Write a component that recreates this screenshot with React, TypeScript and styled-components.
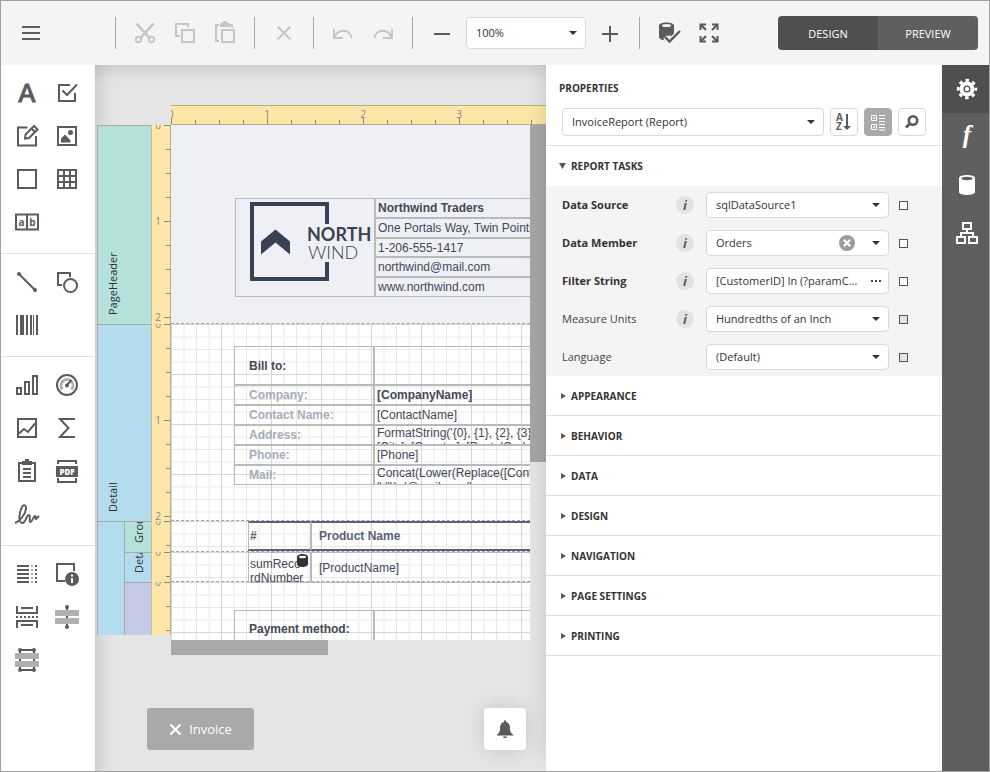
import React from "react";
import styled, { createGlobalStyle, css } from "styled-components";

const ui = `"Open Sans", "Noto Sans", sans-serif`;
const doc = `"Liberation Sans", Arial, sans-serif`;
const ink = "#5b5b5b";
const edge = "#bababa";

const Global = createGlobalStyle`
  * { box-sizing: border-box; }
  body { margin: 0; background: #fff; font-family: ${ui}; font-size: 11px; color: #333; }
  button, input, select { font: inherit; color: inherit; }
`;

const Frame = styled.div`
  display: flex;
  flex-direction: column;
  min-height: 100vh;
  border: 1px solid #a0a0a0;
  background: #fff;
`;

/* ---------- top toolbar ---------- */

const Toolbar = styled.header`
  display: flex;
  align-items: center;
  height: 64px;
  padding: 0 11px 0 10px;
  background: #f4f4f4;
`;

const IconButton = styled.button`
  display: flex;
  align-items: center;
  justify-content: center;
  width: 40px;
  height: 40px;
  padding: 0;
  border: 0;
  background: none;
  color: ${ink};
  &:disabled { color: #c6c6c6; }
`;

const Separator = styled.span`
  width: 1px;
  height: 32px;
  margin: 0 9px;
  background: #a8a8a8;
`;

const MenuSlot = styled.div`
  width: 95px;
`;

const ModeSwitch = styled.div`
  display: flex;
  margin-left: auto;
  border-radius: 4px;
  overflow: hidden;
`;

const ModeButton = styled.button<{ $active?: boolean }>`
  width: 100px;
  height: 34px;
  padding: 0;
  border: 0;
  color: #fff;
  background: ${(p) => (p.$active ? "#4f4f4f" : "#5f5f5f")};
`;

/* ---------- fields ---------- */

const FieldBox = styled.div<{ $size?: "zoom" | "object" | "row" }>`
  position: relative;
  display: flex;
  align-items: center;
  border: 1px solid #d9d9d9;
  border-radius: 4px;
  background: #fff;
  ${(p) => p.$size === "zoom" && css`width: 120px; height: 32px; margin: 0 4px;`}
  ${(p) => p.$size === "object" && css`flex: 1; height: 28px;`}
  ${(p) => p.$size === "row" && css`height: 26px;`}
`;

const SelectControl = styled.select`
  flex: 1;
  min-width: 0;
  height: 100%;
  padding: 0 24px 2px 9px;
  border: 0;
  border-radius: 4px;
  background: none;
  appearance: none;
  outline: none;
`;

const TextControl = styled.input`
  flex: 1;
  min-width: 0;
  height: 100%;
  padding: 0 0 2px 9px;
  border: 0;
  background: none;
  outline: none;
`;

const Caret = styled.svg`
  position: absolute;
  right: 8px;
  pointer-events: none;
`;

const ClearButton = styled.button`
  position: absolute;
  right: 33px;
  display: flex;
  padding: 0;
  border: 0;
  background: none;
`;

const MoreButton = styled.button`
  display: flex;
  align-items: center;
  justify-content: center;
  width: 24px;
  height: 24px;
  padding: 0;
  border: 0;
  background: none;
`;

function Select({ id, label, value, size, clear }: { id: string; label?: string; value: string; size: "zoom" | "object" | "row"; clear?: boolean }) {
  return (
    <FieldBox $size={size}>
      <SelectControl id={id} aria-label={label} defaultValue={value}>
        <option>{value}</option>
      </SelectControl>
      {clear && (
        <ClearButton aria-label="Clear">
          <svg width="16" height="16" viewBox="0 0 16 16">
            <circle cx="8" cy="8" r="8" fill="#9b9b9b" />
            <path d="M4.8 4.8l6.4 6.4M11.2 4.8l-6.4 6.4" stroke="#fff" strokeWidth="2.2" />
          </svg>
        </ClearButton>
      )}
      <Caret width="8" height="4" viewBox="0 0 8 4"><path d="M0 0h8L4 4z" fill="#333" /></Caret>
    </FieldBox>
  );
}

/* ---------- main layout ---------- */

const Body = styled.main`
  display: flex;
  flex: 1;
  overflow: hidden;
`;

const Toolbox = styled.nav`
  width: 94px;
  flex: none;
  background: #fff;
`;

const ToolGroup = styled.div`
  display: grid;
  grid-template-columns: 40px 40px;
  grid-auto-rows: 43px;
  padding: 6px 6px 10px;
  & + & { border-top: 1px solid #e0e0e0; }
`;

const ToolButton = styled(IconButton)`
  height: 43px;
`;

const Surface = styled.section`
  display: flex;
  flex-direction: column;
  flex: 1;
  min-width: 0;
  background: #e5e5e5;
  box-shadow: inset 0 24px 20px -22px rgba(0, 0, 0, 0.16), inset 24px 0 20px -22px rgba(0, 0, 0, 0.16);
`;

const Designer = styled.div`
  display: grid;
  grid-template-columns: 74px minmax(0, 1fr) 16px;
  grid-template-rows: 20px auto 15px;
  padding: 40px 0 0 2px;
`;

const RulerTop = styled.div`
  grid-column: 2 / 4;
  display: flex;
  overflow: hidden;
  border-top: 1px solid #b9ac8e;
  border-bottom: 1px solid #b9ac8e;
  background:
    linear-gradient(90deg, #858585 1px, transparent 1px) left bottom / 96px 6px repeat-x,
    linear-gradient(90deg, #858585 1px, transparent 1px) left bottom / 24px 4px repeat-x,
    #fde6a8;
`;

const tickText = css`
  color: #8a8a8a;
  font-size: 10px;
  flex: none;
`;

const TickX = styled.span`
  ${tickText}
  width: 96px;
  line-height: 16px;
  text-align: center;
  &:first-child { width: 48px; margin-left: -3px; text-align: left; }
  &:nth-child(2) { margin-left: 3px; }
`;

const RulerSide = styled.div`
  width: 20px;
  overflow: hidden;
  border-left: 1px solid #c9bb98;
  border-right: 1px solid #b9ac8e;
  background:
    linear-gradient(#858585 1px, transparent 1px) right top / 6px 96px repeat-y,
    linear-gradient(#858585 1px, transparent 1px) right top / 4px 24px repeat-y,
    #fde6a8;
`;

const TickList = styled.div`
  display: flex;
  flex-direction: column;
  width: 12px;
  margin-top: -48px;
`;

const TickY = styled.span`
  ${tickText}
  height: 96px;
  line-height: 96px;
  text-align: center;
`;

const BandColumn = styled.div`
  grid-column: 1;
  border-left: 1px solid #a9a9a9;
  align-self: start;
`;

const BandRow = styled.div<{ $h: number }>`
  display: flex;
  height: ${(p) => p.$h}px;
`;

const BandLabel = styled.div<{ $bg: string; $narrow?: boolean }>`
  flex: 1;
  display: flex;
  justify-content: flex-start;
  align-items: center;
  writing-mode: vertical-rl;
  transform: rotate(180deg);
  overflow: hidden;
  padding-top: 9px;
  padding-left: ${(p) => (p.$narrow ? 0 : 24)}px;
  border-bottom: 1px solid #a9a9a9;
  background: ${(p) => p.$bg};
  font-size: 11px;
  white-space: nowrap;
`;

const NestedBands = styled.div`
  display: flex;
`;

const NestedStem = styled.div`
  width: 27px;
  border-top: 1px solid #a9a9a9;
  border-right: 1px solid #a9a9a9;
  background: #b3dcee;
`;

const NestedStack = styled.div`
  flex: 1;
`;

const Viewport = styled.div`
  overflow: hidden;
  background: #fff;
`;

const Paper = styled.div`
  width: 650px;
`;

const PaperBand = styled.div<{ $h: number; $shade?: boolean; $x: number; $y: number }>`
  height: ${(p) => p.$h}px;
  padding: ${(p) => p.$y}px 0 0 ${(p) => p.$x}px;
  border-bottom: 1px dashed #a3a3a3;
  &:last-child { border-bottom: 0; }
  ${(p) =>
    p.$shade
      ? css`background: #eff0f5;`
      : css`
          background:
            linear-gradient(90deg, #d6d6d6 1px, transparent 1px) 0 0 / 50px 100%,
            linear-gradient(#d6d6d6 1px, transparent 1px) 0 0 / 100% 50px,
            linear-gradient(90deg, #e8e8e8 1px, transparent 1px) 25px 0 / 50px 100%,
            linear-gradient(#e8e8e8 1px, transparent 1px) 0 25px / 100% 50px,
            linear-gradient(90deg, #f4f4f4 2px, transparent 2px) 12px 0 / 25px 100%,
            linear-gradient(#f4f4f4 2px, transparent 2px) 0 12px / 100% 25px,
            #fff;
        `}
`;

const ReportTable = styled.div<{ $cols: string; $rows: string }>`
  display: grid;
  grid-template-columns: ${(p) => p.$cols};
  grid-template-rows: ${(p) => p.$rows};
  font-family: ${doc};
  font-size: 12px;
  line-height: 14px;
  color: #444857;
`;

const Cell = styled.div<{ $bold?: boolean; $muted?: boolean; $pad?: number; $top?: number; $head?: boolean; $span?: number }>`
  position: relative;
  display: flex;
  align-items: ${(p) => (p.$top === undefined ? "center" : "flex-start")};
  min-width: 0;
  overflow: hidden;
  padding-top: ${(p) => p.$top ?? 0}px;
  padding-left: ${(p) => p.$pad ?? 2}px;
  border: 1px solid ${edge};
  white-space: pre;
  font-weight: ${(p) => (p.$bold ? 700 : 400)};
  ${(p) => p.$muted && css`color: #a6adbb;`}
  ${(p) => p.$span && css`grid-row: span ${p.$span};`}
  ${(p) => p.$head && css`
    color: #5a6178;
    border-top: 2px solid #5a6178;
    border-bottom: 2px solid #5a6178;
  `}
`;

const LogoMark = styled.svg`
  display: block;
  margin: 0 0 8px;
`;

const BindingBadge = styled.svg`
  position: absolute;
  top: 1px;
  right: 2px;
`;

const ScrollThumbY = styled.div`
  height: 337px;
  background: #a6a6a6;
`;

const ScrollThumbX = styled.div`
  grid-column: 2;
  width: 157px;
  background: #a9a9a9;
`;

const SurfaceFooter = styled.footer`
  display: flex;
  justify-content: space-between;
  margin-top: auto;
  padding: 0 20px 21px 52px;
`;

const DocTab = styled.button`
  display: flex;
  align-items: center;
  justify-content: center;
  gap: 7px;
  width: 107px;
  height: 42px;
  padding: 0;
  border: 0;
  border-radius: 3px;
  background: #a9a9a9;
  color: #fff;
  font-size: 13px;
`;

const BellButton = styled.button`
  display: flex;
  align-items: center;
  justify-content: center;
  width: 42px;
  height: 42px;
  padding: 0;
  border: 0;
  border-radius: 4px;
  background: #fff;
  color: ${ink};
  box-shadow: 0 0 20px rgba(0, 0, 0, 0.14);
`;

/* ---------- property panel ---------- */

const Panel = styled.aside`
  position: relative;
  width: 396px;
  flex: none;
  background: #fff;
  box-shadow: 0 -16px 20px rgba(0, 0, 0, 0.14);
`;

const PanelTitle = styled.h2`
  margin: 15px 0 12px 13px;
  font-size: 10px;
  line-height: 16px;
  font-weight: 700;
`;

const ObjectBar = styled.div`
  display: flex;
  gap: 6px;
  padding: 0 16px 9px;
  border-bottom: 1px solid #e0e0e0;
`;

const SquareButton = styled.button<{ $on?: boolean }>`
  display: flex;
  align-items: center;
  justify-content: center;
  width: 28px;
  height: 28px;
  padding: 0;
  border: 1px solid ${(p) => (p.$on ? "#a9a9a9" : "#d9d9d9")};
  border-radius: 4px;
  background: ${(p) => (p.$on ? "#a9a9a9" : "#fff")};
  color: ${ink};
`;

const SectionButton = styled.button<{ $open?: boolean }>`
  display: flex;
  align-items: center;
  gap: 5px;
  width: 100%;
  height: 40px;
  padding: 0 13px;
  border: 0;
  border-bottom: ${(p) => (p.$open ? "0" : "1px solid #e0e0e0")};
  background: none;
  font-size: 10px;
  font-weight: 700;
`;

const PropList = styled.div`
  background: #f4f4f4;
`;

const PropRow = styled.div`
  display: grid;
  grid-template-columns: 114px 18px 12px minmax(0, 1fr) 10px 9px;
  align-items: center;
  height: 38px;
  padding: 0 34px 0 16px;
`;

const PropLabel = styled.label<{ $bold?: boolean }>`
  padding-bottom: 2px;
  font-weight: ${(p) => (p.$bold ? 700 : 400)};
  color: ${(p) => (p.$bold ? "#333" : "#444")};
`;

const InfoButton = styled.button`
  width: 18px;
  height: 18px;
  padding: 0;
  border: 0;
  border-radius: 9px;
  background: #e2e2e2;
  color: ${ink};
  font: italic 700 13px/18px ${ui};
`;

const FieldSlot = styled.div`
  grid-column: 4;
`;

const Tick = styled.input`
  grid-column: 6;
  width: 9px;
  height: 9px;
  margin: 0;
  border: 1px solid #555;
  background: #fff;
  appearance: none;
  &:disabled { background: #e4e4e4; }
`;

const TabStrip = styled.nav`
  position: relative;
  width: 47px;
  flex: none;
  background: #5f5f5f;
`;

const TabButton = styled.button<{ $active?: boolean }>`
  display: flex;
  align-items: center;
  justify-content: center;
  width: 100%;
  height: 48px;
  padding: 0 0 0 3px;
  border: 0;
  color: #fff;
  background: ${(p) => (p.$active ? "#4f4f4f" : "transparent")};
`;

/* ---------- icons ---------- */

const Glyph = styled.svg`
  overflow: visible;
`;

function Icon({ children }: { children: React.ReactNode }) {
  return (
    <Glyph width="24" height="24" viewBox="0 0 24 24" fill="none" stroke="currentColor" strokeWidth="2">
      {children}
    </Glyph>
  );
}

const fill = { fill: "currentColor", stroke: "none" };

const icons: Record<string, React.ReactNode> = {
  menu: <path d="M3 6h18M3 12h18M3 18h18" />,
  cut: <><path d="M3.5 2.5l13 14.5M20.5 2.5l-13 14.500" strokeWidth="2.6" /><circle cx="5.500" cy="18.500" r="2.700" /><circle cx="18.500" cy="18.500" r="2.700" /></>,
  copy: <><path d="M15 6V3H3v12h4" /><path d="M9 9h12v12H9z" /></>,
  paste: <><path d="M6 4H3v16h3M17 4h2v3" /><path d="M7 2h3V0h4v2h3v4H7z" {...fill} /><path d="M9 9h12v12H9z" /></>,
  remove: <path d="M5.500 5.500l13 13M18.500 5.500l-13 13" />,
  undo: <path d="M3 8v9h9M3.500 16.500c3-9 16-9 17 .5" />,
  redo: <path d="M21 8v9h-9M20.500 16.500c-3-9-16-9-17 .5" />,
  minus: <path d="M4 13h16" />,
  plus: <path d="M4 13h16M12 5v16" />,
  validate: <><path d="M2 4.500v12C3 18.500 6 19.500 9 19l3-5 3 2 2-3V4.500C17 .5 2 .5 2 4.500z" {...fill} /><ellipse cx="9.500" cy="4.500" rx="4.500" ry="1.500" fill="#f4f4f4" stroke="none" /><path d="M8 16l4.500 4.500L23 10" stroke="#f4f4f4" strokeWidth="5" /><path d="M8 16l4.500 4.500L23 10" strokeWidth="2.400" /></>,
  full: <><path d="M3.5 9V3.500H9M15 3.500h5.500V9M20.500 15v5.500H15M9 20.500H3.500V15" /><path d="M3.500 3.500L9 9M20.500 3.500L15 9M20.500 20.500L15 15M3.500 20.500L9 15" strokeWidth="2.200" /></>,
  label: <text x="12" y="21" textAnchor="middle" fontFamily="Liberation Mono" fontSize="28" fill="currentColor" strokeWidth="1">A</text>,
  check: <><path d="M15 4H4v16h16v-8" /><path d="M7.500 9.500l4.500 4.500L22 3.500" /></>,
  edit: <><path d="M12.500 3.500H3v18h18V12" /><path d="M10 14.500l.5-4L19 2l3.500 3.500-8.500 8.500zM16.500 4.500L20 8" /></>,
  image: <><path d="M3 3h18v18H3z" /><path d="M6 18.500v-4l4-4 5.500 6v2z" {...fill} /><circle cx="15.500" cy="8.500" r="2.500" {...fill} /></>,
  panel: <path d="M3 3h18v18H3z" />,
  table: <path d="M3 3h18v18H3zM9 3v18M15 3v18M3 9h18M3 15h18" />,
  comb: <><path d="M1 4.500h22v15H1zM12 4.500v15" /><text x="6.500" y="15.500" textAnchor="middle" fontFamily="Open Sans" fontWeight="700" fontSize="10" {...fill}>a</text><text x="17.500" y="15.500" textAnchor="middle" fontFamily="Open Sans" fontWeight="700" fontSize="10" {...fill}>b</text></>,
  line: <><path d="M4 4l16 16" /><circle cx="4" cy="4" r="2" {...fill} /><circle cx="20" cy="20" r="2" {...fill} /></>,
  shape: <><path d="M15 7V3H3v12h4" /><circle cx="15.500" cy="15.500" r="6.500" /></>,
  barcode: <path d="M1 2h2v20H1zM5 2h4v20H5zM11 2h2v20h-2zM15 2h2v20h-2zM18 2h1v20h-1zM21 2h2v20h-2z" {...fill} />,
  chart: <path d="M2 15h4v6H2zM10 9h4v12h-4zM18 3h4v18h-4z" />,
  gauge: <><circle cx="12" cy="12" r="10" /><path d="M7.500 16.500a6 6 0 1 1 9 0" stroke="#b0b0b0" strokeWidth="3" /><path d="M11 13l5.500-6" /><circle cx="12" cy="12.500" r="2" {...fill} /></>,
  spark: <><path d="M3 3h18v18H3z" /><path d="M4 17.500l5-4.500 4 3 7-8.500" /></>,
  sigma: <path d="M20 3H5l8.500 9L5 21h15" />,
  clip: <><path d="M7 4H4v18h16V4h-3M8 10h8M8 14h8M8 18h8" /><path d="M7 2h3V0h4v2h3v4H7z" {...fill} /></>,
  pdf: <><path d="M3 5V2h18v3M3 19v4h18v-4" /><path d="M1 7h22v11H1z" {...fill} /><text x="12" y="15.500" textAnchor="middle" fontFamily="Open Sans" fontWeight="800" fontSize="8" fill="#fff" stroke="none">PDF</text></>,
  sign: <path d="M0 21c5-2 10-8 11-14 .6-4-2.500-5-4-2C4 11 3 20 7 21c4 .5 4-8 7-8 2 0-.5 7 1.500 7s2.500-6 4.500-6c1.500 0-.5 3 1 3l3-3" strokeWidth="1.900" />,
  toc: <><path d="M2 4h12M2 8h12M2 12h12M2 16h12M2 20h12" /><path d="M17 3v18" stroke="#b0b0b0" strokeDasharray="2 2" /><path d="M21 3v18" strokeDasharray="2 2" /></>,
  info: <><path d="M19 9V2H2v17h8" /><circle cx="17" cy="17" r="7" {...fill} /><path d="M17 16v5M17 12.500v2" stroke="#fff" /></>,
  pagebreak: <><path d="M2 1v7h20V1M6 3h12M2 23v-7h20v7M6 20h12" /><path d="M1 12h22" strokeDasharray="2 2" /></>,
  crossline: <><path d="M12 2v20" /><circle cx="12" cy="2" r="2" {...fill} /><circle cx="12" cy="22" r="2" {...fill} /><path d="M0 5h24v6H0zM0 13h24v6H0z" fill="#b0b0b0" stroke="none" /><path d="M12 11v2" /></>,
  crossbox: <><path d="M5 2h14v20H5z" /><circle cx="5" cy="2" r="2" {...fill} /><circle cx="19" cy="2" r="2" {...fill} /><circle cx="5" cy="22" r="2" {...fill} /><circle cx="19" cy="22" r="2" {...fill} /><path d="M0 5h24v6H0zM0 13h24v6H0z" fill="#b0b0b0" stroke="none" /></>,
  bell: <path d="M11 3.500h2v1.500c3 .8 4 3 4 6 0 4 1 5 3 6.500v1H4v-1c2-1.500 3-2.500 3-6.500 0-3 1-5.200 4-6zM10 19.500h4c0 2-4 2-4 0z" {...fill} />,
  gear: <><circle cx="12" cy="12" r="5.500" strokeWidth="4" /><circle cx="12" cy="12" r="8.700" strokeWidth="3" strokeDasharray="3.400 3.433" strokeDashoffset="1.700" /><circle cx="12" cy="12" r="2.200" {...fill} /></>,
  func: <text x="12" y="18" textAnchor="middle" fontFamily="Liberation Serif" fontStyle="italic" fontWeight="700" fontSize="25" {...fill}>f</text>,
  database: <><path d="M4 5v14c0 4 16 4 16 0V5c0-4-16-4-16 0z" {...fill} /><ellipse cx="12" cy="5.500" rx="5.500" ry="1.700" fill="#5f5f5f" stroke="none" /></>,
  tree: <><path d="M8 2h8v6H8zM2 16h8v6H2zM14 16h8v6h-8zM12 8v4M6 16v-4h12v4" /></>,
};

const toolGroups: [string, string][][] = [
  [["label", "Label"], ["check", "Check Box"], ["edit", "Rich Text"], ["image", "Picture Box"], ["panel", "Panel"], ["table", "Table"], ["comb", "Character Comb"]],
  [["line", "Line"], ["shape", "Shape"], ["barcode", "Bar Code"]],
  [["chart", "Chart"], ["gauge", "Gauge"], ["spark", "Sparkline"], ["sigma", "Pivot Grid"], ["clip", "Subreport"], ["pdf", "PDF Content"], ["sign", "PDF Signature"]],
  [["toc", "Table of Contents"], ["info", "Page Info"], ["pagebreak", "Page Break"], ["crossline", "Cross-band Line"], ["crossbox", "Cross-band Box"]],
];

function ToolbarIcon({ name, label, disabled }: { name: string; label: string; disabled?: boolean }) {
  return <IconButton aria-label={label} disabled={disabled}><Icon>{icons[name]}</Icon></IconButton>;
}

function SideRuler({ ticks }: { ticks: number }) {
  return (
    <RulerSide>
      <TickList>
        {Array.from({ length: ticks }, (_, i) => <TickY key={i}>{i}</TickY>)}
      </TickList>
    </RulerSide>
  );
}

function Band({ name, color, height, ticks, narrow }: { name: string; color: string; height: number; ticks: number; narrow?: boolean }) {
  return (
    <BandRow $h={height}>
      <BandLabel $bg={color} $narrow={narrow}>{name}</BandLabel>
      <SideRuler ticks={ticks} />
    </BandRow>
  );
}

function Logo() {
  return (
    <LogoMark width="138" height="90" viewBox="236 199 138 90" fill="#3b4154">
      <path d="M329 224V202H250V281H329V262H325V277H254V206H325V224z" />
      <path d="M275.500 229.500L290 241.500V254.500L275.500 242.500L261 254.500V241.500z" />
      <text x="307" y="241" fontFamily="Lato" fontWeight="700" fontSize="18">NORTH</text>
      <text x="308" y="259" fontFamily="Lato" fontWeight="300" fontSize="18">WIND</text>
    </LogoMark>
  );
}

const contactLines = ["One Portals Way, Twin Points WA", "1-206-555-1417", "northwind@mail.com", "www.northwind.com"];

const billRows: { name: string; value: string; bold?: boolean; top?: number }[] = [
  { name: "Company:", value: "[CompanyName]", bold: true },
  { name: "Contact Name:", value: "[ContactName]" },
  { name: "Address:", value: "FormatString('{0}, {1}, {2}, {3}',\n[City], [Country], [PostalCode]", top: 0 },
  { name: "Phone:", value: "[Phone]" },
  { name: "Mail:", value: "Concat(Lower(Replace([ContactName],\n'','')), '@mail.com')", top: 0 },
];

const properties: { id: string; name: string; value: string; bold?: boolean; info?: boolean; clear?: boolean; text?: boolean }[] = [
  { id: "data-source", name: "Data Source", value: "sqlDataSource1", bold: true, info: true },
  { id: "data-member", name: "Data Member", value: "Orders", bold: true, info: true, clear: true },
  { id: "filter-string", name: "Filter String", value: "[CustomerID] In (?paramC...", bold: true, info: true, text: true },
  { id: "measure-units", name: "Measure Units", value: "Hundredths of an Inch", info: true },
  { id: "language", name: "Language", value: "(Default)" },
];

const sections = ["APPEARANCE", "BEHAVIOR", "DATA", "DESIGN", "NAVIGATION", "PAGE SETTINGS", "PRINTING"];

export default function App() {
  return (
    <>
      <Global />
      <Frame>
        <Toolbar>
          <MenuSlot><ToolbarIcon name="menu" label="Menu" /></MenuSlot>
          <Separator />
          <ToolbarIcon name="cut" label="Cut" disabled />
          <ToolbarIcon name="copy" label="Copy" disabled />
          <ToolbarIcon name="paste" label="Paste" disabled />
          <Separator />
          <ToolbarIcon name="remove" label="Delete" disabled />
          <Separator />
          <ToolbarIcon name="undo" label="Undo" disabled />
          <ToolbarIcon name="redo" label="Redo" disabled />
          <Separator />
          <ToolbarIcon name="minus" label="Zoom out" />
          <Select id="zoom" label="Zoom" value="100%" size="zoom" />
          <ToolbarIcon name="plus" label="Zoom in" />
          <Separator />
          <ToolbarIcon name="validate" label="Validate bindings" />
          <ToolbarIcon name="full" label="Full screen" />
          <ModeSwitch>
            <ModeButton $active>DESIGN</ModeButton>
            <ModeButton>PREVIEW</ModeButton>
          </ModeSwitch>
        </Toolbar>

        <Body>
          <Toolbox>
            {toolGroups.map((group, i) => (
              <ToolGroup key={i}>
                {group.map(([name, label]) => (
                  <ToolButton key={name} aria-label={label}><Icon>{icons[name]}</Icon></ToolButton>
                ))}
              </ToolGroup>
            ))}
          </Toolbox>

          <Surface>
            <Designer>
              <RulerTop>
                {[0, 1, 2, 3].map((n) => <TickX key={n}>{n}</TickX>)}
              </RulerTop>

              <BandColumn>
                <Band name="PageHeader" color="#b4e1db" height={199} ticks={3} />
                <Band name="Detail" color="#b3dcee" height={197} ticks={3} />
                <NestedBands>
                  <NestedStem />
                  <NestedStack>
                    <Band name="GroupHeader" color="#b4e1db" height={31} ticks={1} narrow />
                    <Band name="DetailBand" color="#b3dcee" height={30} ticks={1} narrow />
                    <Band name="" color="#c5cbe7" height={53} ticks={1} narrow />
                  </NestedStack>
                </NestedBands>
              </BandColumn>

              <Viewport>
                <Paper>
                  <PaperBand $h={199} $x={64} $y={73} $shade>
                    <ReportTable $cols="140px 1fr" $rows="20px 20px 19px 20px 20px">
                      <Cell $span={5} $pad={0}><Logo /></Cell>
                      <Cell $bold>Northwind Traders</Cell>
                      {contactLines.map((line) => <Cell key={line}>{line}</Cell>)}
                    </ReportTable>
                  </PaperBand>
                  <PaperBand $h={197} $x={63} $y={22}>
                    <ReportTable $cols="140px 1fr" $rows="39px repeat(5, 20px)">
                      <Cell $bold $pad={14}>Bill to:</Cell>
                      <Cell />
                      {billRows.map((row) => (
                        <React.Fragment key={row.name}>
                          <Cell $bold $muted $pad={14}>{row.name}</Cell>
                          <Cell $bold={row.bold} $top={row.top}>{row.value}</Cell>
                        </React.Fragment>
                      ))}
                    </ReportTable>
                  </PaperBand>
                  <PaperBand $h={31} $x={77} $y={0}>
                    <ReportTable $cols="63px 1fr" $rows="30px">
                      <Cell $bold $head $pad={1}>#</Cell>
                      <Cell $bold $head $pad={7}>Product Name</Cell>
                    </ReportTable>
                  </PaperBand>
                  <PaperBand $h={30} $x={77} $y={0}>
                    <ReportTable $cols="63px 1fr" $rows="31px">
                      <Cell $pad={1} $top={4}>
                        {"sumReco\nrdNumber"}
                        <BindingBadge width="11" height="13" viewBox="0 0 11 13">
                          <path d="M0 3v7c0 4 11 4 11 0V3c0-4-11-4-11 0z" fill="#333" />
                          <ellipse cx="5.500" cy="3" rx="3.500" ry="1.200" fill="#fff" />
                        </BindingBadge>
                      </Cell>
                      <Cell $pad={7}>[ProductName]</Cell>
                    </ReportTable>
                  </PaperBand>
                  <PaperBand $h={58} $x={63} $y={28}>
                    <ReportTable $cols="140px 1fr" $rows="38px">
                      <Cell $bold $pad={14}>Payment method:</Cell>
                      <Cell />
                    </ReportTable>
                  </PaperBand>
                </Paper>
              </Viewport>
              <ScrollThumbY />
              <ScrollThumbX />
            </Designer>

            <SurfaceFooter>
              <DocTab>
                <svg width="13" height="13" viewBox="0 0 13 13" stroke="#fff" strokeWidth="2"><path d="M1.500 1.500l10 10M11.500 1.500l-10 10" /></svg>
                Invoice
              </DocTab>
              <BellButton aria-label="Notifications"><Icon>{icons.bell}</Icon></BellButton>
            </SurfaceFooter>
          </Surface>

          <Panel>
            <PanelTitle>PROPERTIES</PanelTitle>
            <ObjectBar>
              <Select id="object" label="Report element" value="InvoiceReport (Report)" size="object" />
              <SquareButton aria-label="Sort alphabetically">
                <Glyph width="18" height="20" viewBox="0 0 18 20" fill={ink} fontFamily="Open Sans" fontWeight="700" fontSize="10">
                  <text x="1" y="9">A</text>
                  <text x="1" y="18">Z</text>
                  <path d="M11 2h2v12h3l-4 4-4-4h3z" />
                </Glyph>
              </SquareButton>
              <SquareButton aria-label="Group by category" $on>
                <svg width="16" height="18" viewBox="0 0 16 18" fill="none" stroke="#fff">
                  <path d="M1.500 2.500h5v5h-5zM1.500 11.500h5v5h-5zM3 5h2M4 4v2M3 14h2M4 13v2M9 2.500h6M9 5.500h6M9 8.500h6M9 11.500h6M9 14.500h6M9 17h6" />
                </svg>
              </SquareButton>
              <SquareButton aria-label="Search">
                <svg width="16" height="16" viewBox="0 0 16 16" fill="none" stroke={ink}>
                  <circle cx="9" cy="6.500" r="4.200" strokeWidth="2.600" />
                  <path d="M6 9.500l-4 4" strokeWidth="3" />
                </svg>
              </SquareButton>
            </ObjectBar>

            <SectionButton $open aria-expanded="true">
              <svg width="7" height="6" viewBox="0 0 7 6"><path d="M0 0h7L3.500 6z" fill={ink} /></svg>
              REPORT TASKS
            </SectionButton>
            <PropList>
              {properties.map((p) => (
                <PropRow key={p.id}>
                  <PropLabel htmlFor={p.id} $bold={p.bold}>{p.name}</PropLabel>
                  {p.info && <InfoButton aria-label={`About ${p.name}`}>i</InfoButton>}
                  <FieldSlot>
                    {p.text ? (
                      <FieldBox $size="row">
                        <TextControl id={p.id} defaultValue={p.value} />
                        <MoreButton aria-label="Edit filter">
                          <svg width="10" height="2" viewBox="0 0 10 2"><path d="M0 0h2v2H0zM4 0h2v2H4zM8 0h2v2H8z" fill="#444" /></svg>
                        </MoreButton>
                      </FieldBox>
                    ) : (
                      <Select id={p.id} value={p.value} size="row" clear={p.clear} />
                    )}
                  </FieldSlot>
                  <Tick type="checkbox" aria-label={`${p.name} options`} disabled={!p.bold} />
                </PropRow>
              ))}
            </PropList>
            {sections.map((name) => (
              <SectionButton key={name} aria-expanded="false">
                <svg width="7" height="6" viewBox="0 0 7 6"><path d="M2 0l5 3-5 3z" fill={ink} /></svg>
                {name}
              </SectionButton>
            ))}
          </Panel>

          <TabStrip>
            <TabButton $active aria-label="Properties"><Icon>{icons.gear}</Icon></TabButton>
            <TabButton aria-label="Expressions"><Icon>{icons.func}</Icon></TabButton>
            <TabButton aria-label="Fields"><Icon>{icons.database}</Icon></TabButton>
            <TabButton aria-label="Report explorer"><Icon>{icons.tree}</Icon></TabButton>
          </TabStrip>
        </Body>
      </Frame>
    </>
  );
}
